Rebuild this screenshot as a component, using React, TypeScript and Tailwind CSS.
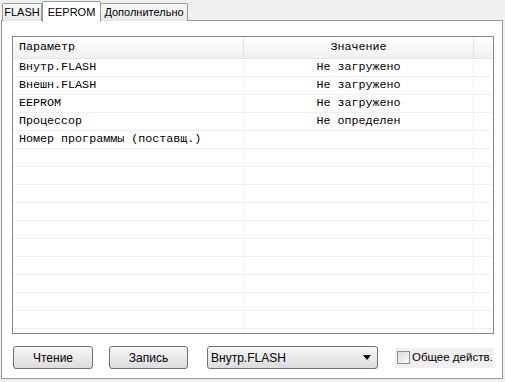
import React from 'react';

const rows: [string, string][] = [
  ['Внутр.FLASH', 'Не загружено'],
  ['Внешн.FLASH', 'Не загружено'],
  ['EEPROM', 'Не загружено'],
  ['Процессор', 'Не определен'],
  ['Номер программы (поставщ.)', ''],
];

// pad out to fill the grid like the real list view
const allRows: [string, string][] = [...rows, ...Array.from({ length: 11 }, () => ['', ''] as [string, string])];

const mono = { fontFamily: '"Liberation Mono", "Courier New", monospace' };

export default function App() {
  return (
    <div
      className="w-[505px] h-[382px] bg-[#f0f0f0] overflow-hidden text-[#000]"
      style={{ fontFamily: '"Liberation Sans", Tahoma, Arial, sans-serif' }}
    >
      {/* Tabs */}
      <div className="h-[21px] flex items-end pl-[2px] relative z-10 text-[11px]">
        <div className="w-[40px] h-[18px] flex items-center justify-center border border-[#919b9c] border-b-0 bg-gradient-to-b from-[#fafafa] to-[#e8e8e8] rounded-t-[2px]">
          FLASH
        </div>
        <div className="w-[59px] h-[21px] -mb-px flex items-center justify-center border border-[#919b9c] border-b-0 bg-white rounded-t-[2px]">
          EEPROM
        </div>
        <div className="w-[87px] h-[18px] flex items-center justify-center border border-[#919b9c] border-b-0 border-l-0 bg-gradient-to-b from-[#fafafa] to-[#e8e8e8] rounded-t-[2px]">
          Дополнительно
        </div>
      </div>

      {/* Panel */}
      <div className="ml-px w-[502px] h-[359px] -mt-px bg-white border border-[#919b9c] pl-[10px] pt-[15px]">
        {/* Table */}
        <div className="w-[482px] h-[298px] border border-[#828790] overflow-hidden bg-white">
          <div
            className="flex h-[22px] bg-gradient-to-b from-[#ffffff] to-[#f0f0f0] border-b border-[#e5e5e5] text-[11.7px]"
            style={mono}
          >
            <div className="w-[231px] pl-[6px] flex items-center border-r border-[#e3e3e3]">Параметр</div>
            <div className="w-[230px] flex items-center justify-center border-r border-[#e3e3e3]">Значение</div>
            <div className="flex-1" />
          </div>
          {allRows.map(([k, v], i) => (
            <div key={i} className="flex h-[18px] border-b border-[#f0f0f0] text-[11.7px]" style={mono}>
              <div className="w-[231px] pl-[6px] flex items-center border-r border-[#f0f0f0] whitespace-nowrap">{k}</div>
              <div className="w-[230px] flex items-center justify-center border-r border-[#f0f0f0]">{v}</div>
              <div className="flex-1" />
            </div>
          ))}
        </div>

        {/* Bottom controls */}
        <div className="flex items-center mt-[12px] h-[23px] text-[12px] whitespace-nowrap">
          <button className="w-[80px] h-[23px] ml-px rounded-[3px] border border-[#707070] bg-gradient-to-b from-[#f7f7f7] to-[#dcdcdc] flex items-center justify-center">
            Чтение
          </button>
          <button className="w-[79px] h-[23px] ml-[16px] rounded-[3px] border border-[#707070] bg-gradient-to-b from-[#f7f7f7] to-[#dcdcdc] flex items-center justify-center">
            Запись
          </button>
          <div className="w-[171px] h-[23px] ml-[19px] rounded-[3px] border border-[#707070] bg-gradient-to-b from-[#f7f7f7] to-[#dcdcdc] flex items-center pl-[3px] pr-[6px]">
            <span className="flex-1">Внутр.FLASH</span>
            <svg width="8" height="5" viewBox="0 0 8 5">
              <path d="M0 0 H8 L4 5 Z" fill="#000" />
            </svg>
          </div>
          <div className="ml-[17px] w-[98px] h-[20px] bg-[#f0f0f0] flex items-center pl-[2px] text-[11.5px]">
            <div className="w-[13px] h-[13px] shrink-0 border border-[#8e8f8f] bg-gradient-to-br from-[#dcdcdc] to-[#f8f8f8]" />
            <span className="ml-[2px]">Общее действ.</span>
          </div>
        </div>
      </div>
    </div>
  );
}
